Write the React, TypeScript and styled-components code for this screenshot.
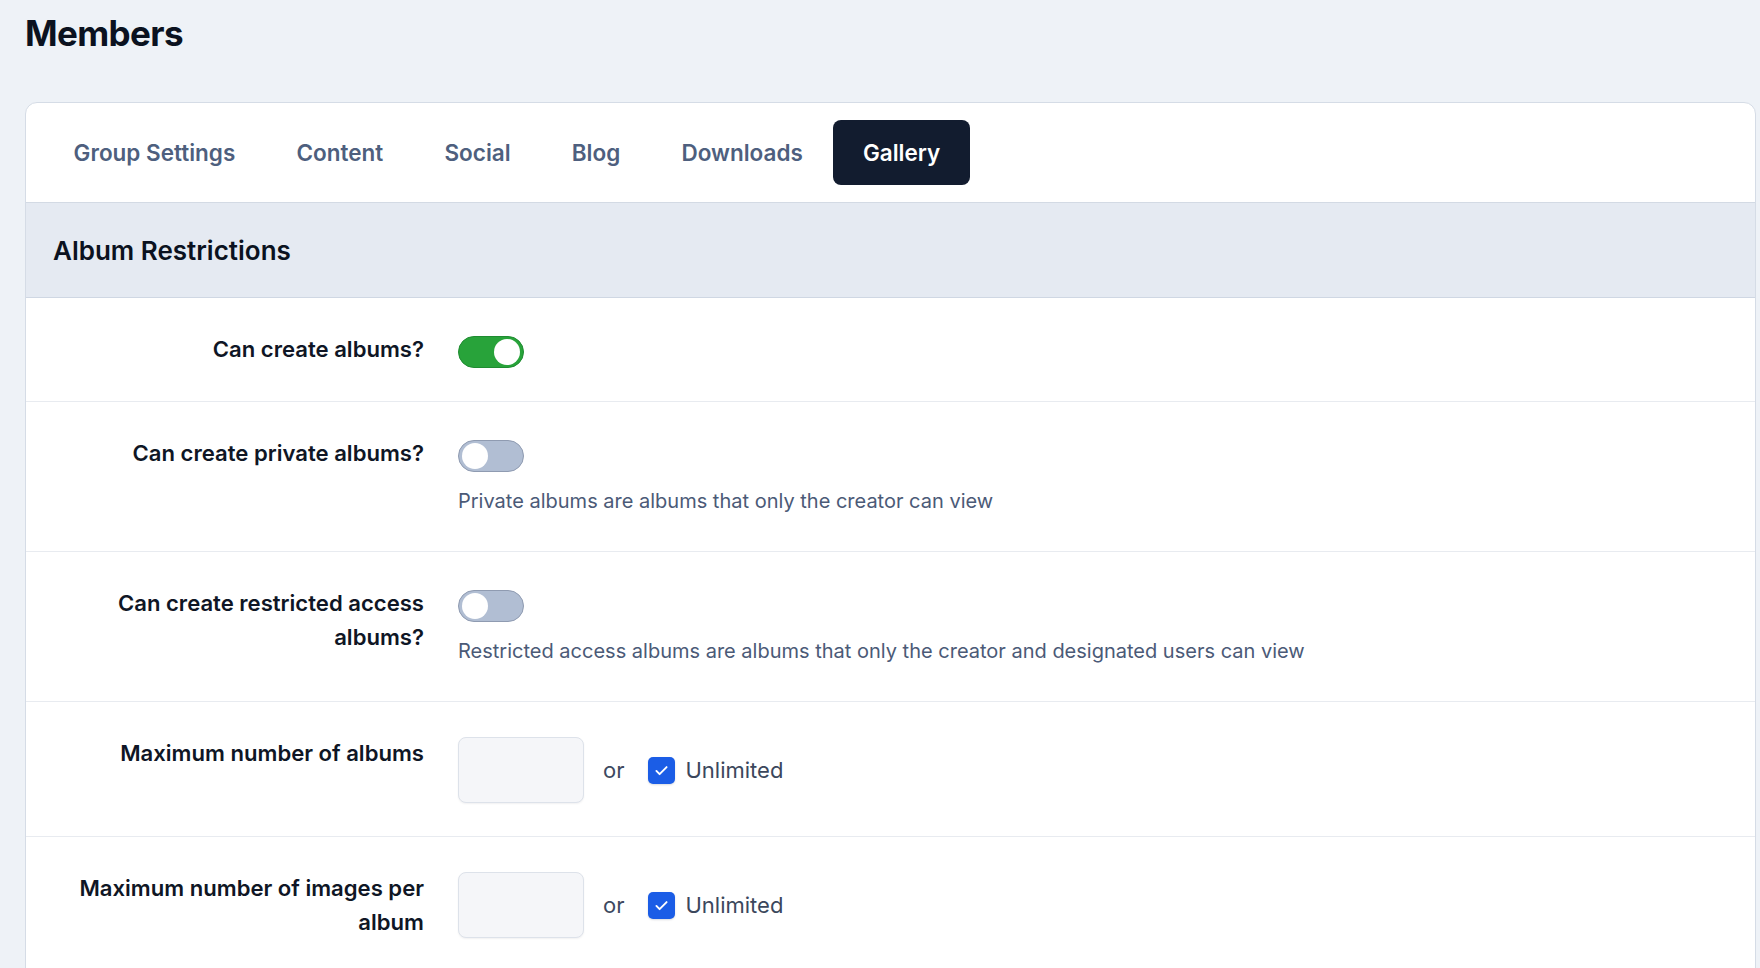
import React, { useState } from "react";
import styled, { createGlobalStyle } from "styled-components";

const Global = createGlobalStyle`
  html, body { margin: 0; padding: 0; background: #eef2f7; }
  body { font-family: Inter, "Noto Sans", "Liberation Sans", sans-serif; -webkit-font-smoothing: antialiased; }
  * { box-sizing: border-box; }
`;

const Page = styled.div`
  padding: 11px 4px 0 25px;
  min-height: 968px;
  overflow: hidden;
`;

const Title = styled.h1`
  margin: 0 0 47px 0;
  font-size: 35px;
  line-height: 44px;
  font-weight: 700;
  letter-spacing: -0.6px;
  color: #0b1220;
`;

const Card = styled.div`
  background: #ffffff;
  border: 1px solid #d5dce6;
  border-radius: 12px 12px 0 0;
  overflow: hidden;
`;

const TabBar = styled.nav`
  display: flex;
  align-items: center;
  padding: 17px 17px;
  border-bottom: 1px solid #d3dae4;
`;

const Tab = styled.button<{ $active?: boolean }>`
  height: 65px;
  padding: 0 ${(p) => (p.$active ? "29.5px" : "30.6px")};
  border: none;
  border-radius: 8px;
  font-family: inherit;
  font-size: 22.5px;
  font-weight: 600;
  cursor: pointer;
  background: ${(p) => (p.$active ? "#121c2f" : "transparent")};
  color: ${(p) => (p.$active ? "#ffffff" : "#4e5f7e")};
`;

const SectionHeader = styled.div`
  height: 95px;
  display: flex;
  align-items: center;
  padding-left: 27px;
  background: #e5eaf2;
  border-bottom: 1px solid #cfd7e3;
  font-size: 26px;
  font-weight: 600;
  color: #0b1220;
`;

const Row = styled.div`
  display: grid;
  grid-template-columns: 398px 1fr;
  column-gap: 34px;
  padding: 34px 0 33px;
  border-bottom: 1px solid #e8ebf0;
`;

const Label = styled.div`
  padding-left: 30px;
  text-align: right;
  font-size: 22.1px;
  line-height: 34px;
  font-weight: 600;
  color: #0f1625;
`;

const Control = styled.div`
  display: flex;
  flex-direction: column;
  align-items: flex-start;
`;

const ToggleTrack = styled.button<{ $on: boolean }>`
  position: relative;
  margin-top: 4px;
  width: 66px;
  height: 32px;
  padding: 0;
  border-radius: 16px;
  cursor: pointer;
  border: 1px solid ${(p) => (p.$on ? "#1f8c31" : "#8f9bb1")};
  background: ${(p) => (p.$on ? "#28a33a" : "#b1bed3")};
`;

const ToggleKnob = styled.span<{ $on: boolean }>`
  position: absolute;
  top: 2px;
  left: ${(p) => (p.$on ? "35px" : "3px")};
  width: 26px;
  height: 26px;
  border-radius: 50%;
  background: #ffffff;
`;

const Description = styled.p`
  margin: 14px 0 2px;
  font-size: 20px;
  line-height: 30px;
  color: #4b5a77;
`;

const InlineControls = styled.div`
  display: flex;
  align-items: center;
  margin-top: 1px;
`;

const NumberInput = styled.input`
  width: 126px;
  height: 66px;
  border: 1px solid #dde2ea;
  border-radius: 8px;
  background: #f5f6f9;
  box-shadow: 0 1px 2px rgba(15, 23, 42, 0.06);
  font-family: inherit;
  font-size: 20px;
  padding: 0 12px;
  outline: none;
`;

const OrText = styled.span`
  margin: 0 24px 0 19px;
  font-size: 22px;
  color: #3d4960;
`;

const CheckLabel = styled.label`
  display: flex;
  align-items: center;
  gap: 10px;
  font-size: 22px;
  color: #3b475c;
  cursor: pointer;
`;

const CheckBox = styled.span`
  width: 27px;
  height: 27px;
  border-radius: 5px;
  background: #1b5de6;
  display: flex;
  align-items: center;
  justify-content: center;
  box-shadow: 0 1px 2px rgba(15, 23, 42, 0.15);
`;

function Toggle({ initial }: { initial: boolean }) {
  const [on, setOn] = useState(initial);
  return (
    <ToggleTrack $on={on} onClick={() => setOn(!on)} aria-pressed={on}>
      <ToggleKnob $on={on} />
    </ToggleTrack>
  );
}

function Unlimited() {
  return (
    <InlineControls>
      <NumberInput type="text" />
      <OrText>or</OrText>
      <CheckLabel>
        <CheckBox>
          <svg width="17" height="17" viewBox="0 0 16 16" fill="none">
            <path d="M3.2 8.4l3 3L12.8 4.8" stroke="#fff" strokeWidth="1.8" strokeLinecap="round" strokeLinejoin="round" />
          </svg>
        </CheckBox>
        Unlimited
      </CheckLabel>
    </InlineControls>
  );
}

const tabs = ["Group Settings", "Content", "Social", "Blog", "Downloads", "Gallery"];

export default function App() {
  return (
    <>
      <Global />
      <Page>
        <Title>Members</Title>
        <Card>
          <TabBar>
            {tabs.map((t) => (
              <Tab key={t} $active={t === "Gallery"}>
                {t}
              </Tab>
            ))}
          </TabBar>
          <SectionHeader>Album Restrictions</SectionHeader>
          <Row>
            <Label>Can create albums?</Label>
            <Control>
              <Toggle initial={true} />
            </Control>
          </Row>
          <Row>
            <Label>Can create private albums?</Label>
            <Control>
              <Toggle initial={false} />
              <Description>Private albums are albums that only the creator can view</Description>
            </Control>
          </Row>
          <Row>
            <Label>Can create restricted access albums?</Label>
            <Control>
              <Toggle initial={false} />
              <Description>
                Restricted access albums are albums that only the creator and designated users can view
              </Description>
            </Control>
          </Row>
          <Row>
            <Label>Maximum number of albums</Label>
            <Control>
              <Unlimited />
            </Control>
          </Row>
          <Row>
            <Label>Maximum number of images per album</Label>
            <Control>
              <Unlimited />
            </Control>
          </Row>
        </Card>
      </Page>
    </>
  );
}
